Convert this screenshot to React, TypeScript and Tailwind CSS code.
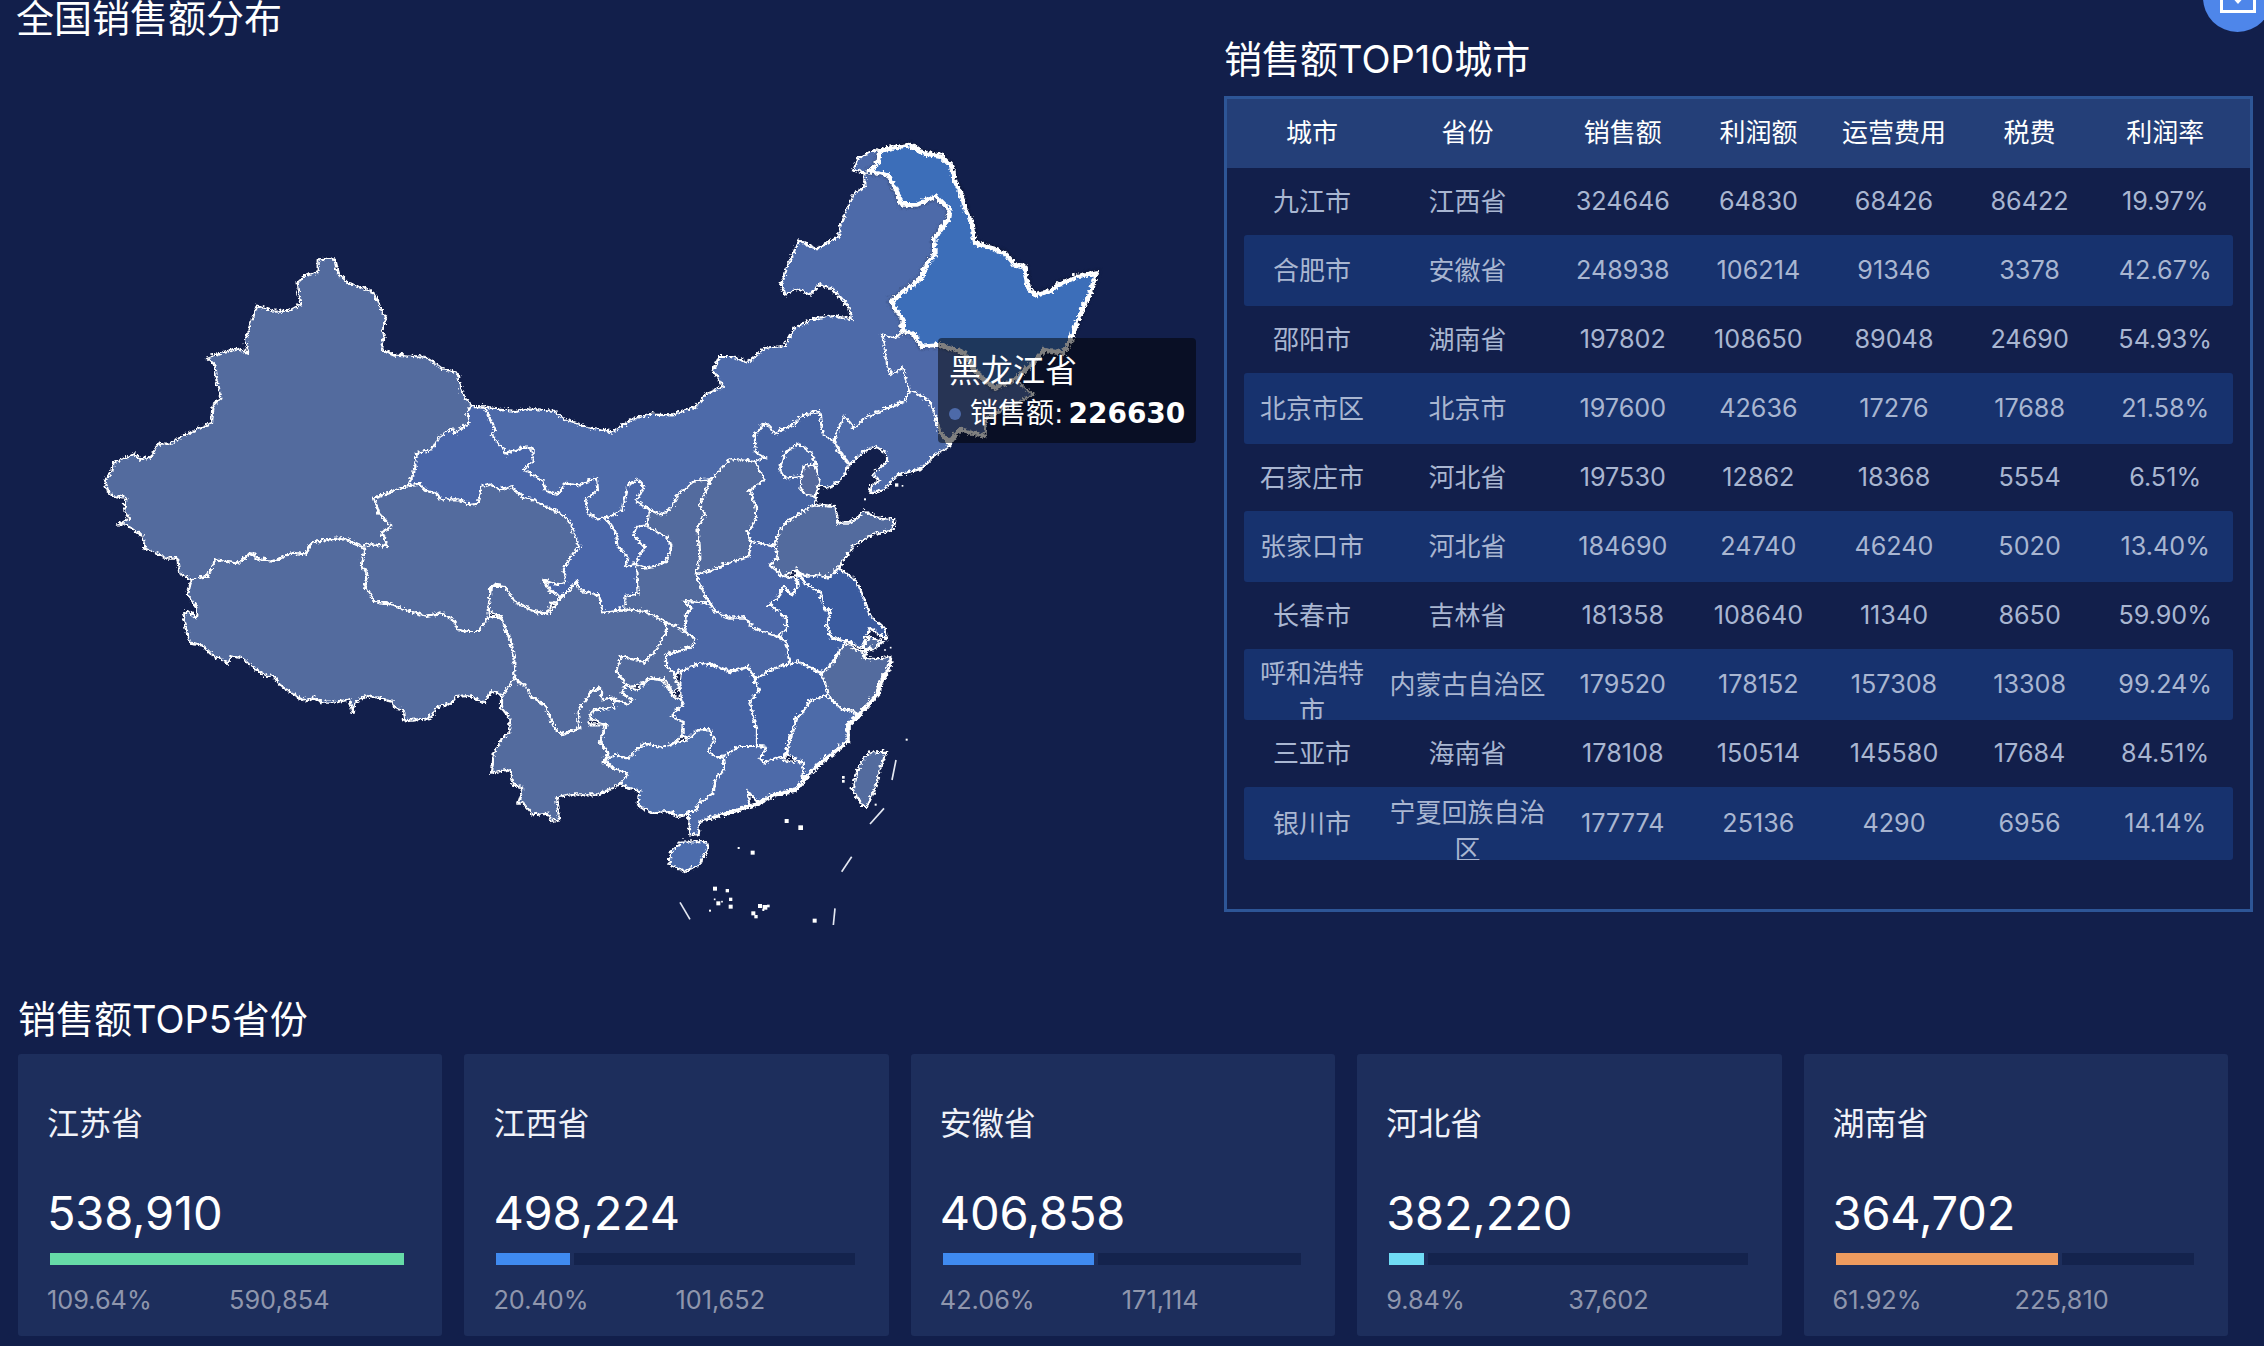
const headers = ["城市", "省份", "销售额", "利润额", "运营费用", "税费", "利润率"];

const rows = [
  ["九江市", "江西省", "324646", "64830", "68426", "86422", "19.97%"],
  ["合肥市", "安徽省", "248938", "106214", "91346", "3378", "42.67%"],
  ["邵阳市", "湖南省", "197802", "108650", "89048", "24690", "54.93%"],
  ["北京市区", "北京市", "197600", "42636", "17276", "17688", "21.58%"],
  ["石家庄市", "河北省", "197530", "12862", "18368", "5554", "6.51%"],
  ["张家口市", "河北省", "184690", "24740", "46240", "5020", "13.40%"],
  ["长春市", "吉林省", "181358", "108640", "11340", "8650", "59.90%"],
  ["呼和浩特市", "内蒙古自治区", "179520", "178152", "157308", "13308", "99.24%"],
  ["三亚市", "海南省", "178108", "150514", "145580", "17684", "84.51%"],
  ["银川市", "宁夏回族自治区", "177774", "25136", "4290", "6956", "14.14%"],
];

const cards = [
  { name: "江苏省", value: "538,910", rate: "109.64%", profit: "590,854", pct: 100, color: "#66dba8" },
  { name: "江西省", value: "498,224", rate: "20.40%", profit: "101,652", pct: 20.4, color: "#3f8af0" },
  { name: "安徽省", value: "406,858", rate: "42.06%", profit: "171,114", pct: 42.06, color: "#3f8af0" },
  { name: "河北省", value: "382,220", rate: "9.84%", profit: "37,602", pct: 9.84, color: "#70dcf5" },
  { name: "湖南省", value: "364,702", rate: "61.92%", profit: "225,810", pct: 61.92, color: "#ee9b5f" },
];

// map outlines are traced from four crops, so every list is offset by its crop origin
const W = [270, 720];
const N = [1800, 390];
const C = [1440, 1200];
const S = [1440, 1860];

const at = (d: number[], s: string) =>
  s
    .trim()
    .split(/\s+/)
    .map((p) => {
      const [x, y] = p.split(",").map(Number);
      return `${x + d[0]},${y + d[1]}`;
    })
    .join(" ");

const provinces = [
  // 内蒙古, lower edge runs under its neighbours
  { fill: "#4d6aa9", pts: at(W, "1140,495 1180,497 1270,510 1310,502 1390,510 1420,535 1490,558 1555,570") + " " + at(N, "30,905 90,865 150,848 215,850 280,828 320,785 365,765 335,720 355,675 390,675 440,693 490,650 550,645 580,590 630,565 695,552 750,565 745,530 690,470 655,460 625,490 590,472 550,490 540,460 555,410 593,328 645,352 715,315 715,285 755,190 790,165 790,125 755,115 770,80 825,55 850,70 900,150 960,190 1040,200 1070,260 1040,370 1000,450 930,530 960,620 960,700 950,830 800,900 650,950 520,950 470,1000 300,1100 235,1130") + " " + at(C, "520,350 450,340 380,370 300,340") + " " + at(W, "1300,700 1180,560") },
  // 甘肃
  { fill: "#4966a9", pts: at(W, "1140,495 1180,497 1212,570 1200,580 1238,625 1240,640 1290,620 1325,620 1325,660 1295,683 1355,720 1360,745 1400,760 1420,725 1465,730 1515,710 1518,745 1482,775 1490,815 1515,832") + " " + at(C, "372,350 450,340 600,350 600,450 560,560 470,600 425,625 365,633 350,580 300,570 285,540 262,570 232,590 190,540 180,500") + " " + at(W, "1300,850 950,800 900,700 1050,500") },
  // 新疆
  { fill: "#536b9e", pts: at(W, "300,1015 265,995 258,950 225,950 160,920 155,885 105,850 82,850 115,830 100,810 103,770 65,765 48,750 40,715 60,695 65,665 105,650 130,635 145,655 180,645 200,608 235,608 265,590 300,572 360,545 365,490 388,470 375,410 370,370 347,350 395,333 437,322 472,335 462,295 485,225 497,192 535,208 590,210 628,190 617,125 640,103 680,90 680,55 730,52 740,95 770,125 800,135 850,155 870,205 885,230 872,265 878,285 870,325 905,340 1005,348 1050,380 1100,397 1110,450 1140,495 1128,510 1133,545 1090,575 1085,560 1040,590 1020,628 978,635 965,700 948,733 900,752 847,770 862,815 900,855 872,872 888,915 835,910 810,915 760,892 710,895 660,905 640,940 600,935 550,960 500,955 480,935 440,965 370,955 350,1005") },
  // 青海
  { fill: "#536b9e", pts: at(W, "948,733 985,728 1000,745 1035,755 1050,775 1105,775 1130,790 1160,785 1170,735 1195,728 1225,745 1262,735 1295,770 1325,775 1375,800 1415,820 1440,850 1450,880 1465,915 1440,945 1415,985 1425,1020 1400,1030 1355,1015 1365,1040 1405,1065 1405,1090 1380,1085 1370,1115 1310,1105 1265,1085 1240,1035 1205,1030 1195,1050 1210,1070 1190,1100 1195,1125 1160,1170 1130,1170 1100,1165 1085,1135 1050,1115 1005,1125 945,1108 900,1090 850,1080 820,1035 828,1000 810,970 820,925 810,915 835,910 888,915 872,872 900,855 862,815 847,770 900,752") },
  // 西藏
  { fill: "#536b9e", pts: at(W, "300,1015 350,1005 370,955 440,965 480,935 500,955 550,960 600,935 640,940 660,905 710,895 760,892 810,915 820,925 810,970 828,1000 820,1035 850,1080 900,1090 945,1108 1005,1125 1050,1115 1085,1135 1100,1165 1130,1170 1160,1170 1195,1125 1230,1130 1250,1185 1265,1225 1272,1310 1265,1345 1250,1365 1200,1350 1180,1385 1130,1362 1095,1365 1080,1385 1035,1400 1015,1432 940,1438 935,1405 910,1400 905,1380 825,1362 790,1385 785,1415 775,1375 725,1385 695,1385 670,1370 640,1378 600,1355 565,1330 545,1303 525,1305 480,1275 450,1248 420,1243 410,1265 355,1235 330,1210 295,1205 280,1145 275,1120 288,1108 315,1130 318,1100 288,1060 295,1030") },
  // 宁夏
  { fill: "#4a66a8", pts: at(C, "372,350 420,330 440,250 470,235 487,255 465,300 505,325 497,370 465,375 455,405 490,435 460,490 430,495 440,465 410,440 405,395") },
  // 陕西
  { fill: "#536b9e", pts: at(C, "690,235 655,310 670,340 650,380 655,470 645,520 665,570 685,605 610,600 630,620 615,640 610,690 555,662 490,630 430,625 430,585 470,578 465,490 490,500 520,495 555,480 570,440 560,410 497,375 505,325 540,340 570,320 590,280 635,240") },
  // 山西
  { fill: "#536b9e", pts: at(C, "820,180 850,235 805,265 825,320 825,350 800,395 810,420 800,465 740,485 700,505 645,520 655,470 650,380 670,340 655,310 690,235 745,175 780,175") },
  // 河北
  { fill: "#4563a3", pts: at(C, "1060,120 1025,100 1015,30 970,40 935,70 880,95 850,65 820,100 825,155 850,170 820,180 850,235 805,265 825,320 825,350 800,395 810,420 880,435 890,400 915,360 1000,310 1005,290 1012,250 1040,260 1075,240 1105,190 1070,150") },
  // 北京
  { fill: "#4a68a6", pts: at(C, "950,125 990,155 1005,190 965,195 960,225 910,230 895,205 910,155") },
  // 天津
  { fill: "#55699c", pts: at(C, "965,195 1000,190 1015,240 1000,285 975,280 955,265") },
  // 辽宁
  { fill: "#4d6aa9", pts: at(N, "925,780 945,785 985,810 1005,860 1015,905 1045,945 1000,970 955,1015 890,1030 850,1075 805,1085 810,1060 835,1050 815,1030 855,990 855,965 825,945 790,960 745,1000 710,950 700,930 715,880 730,855 760,890 790,860 860,830 910,810") },
  // 吉林
  { fill: "#4e69a8", pts: at(N, "905,600 885,620 840,610 850,640 855,700 870,730 905,710 925,780 945,785 985,810 1005,860 1015,905 1045,935 1075,895 1150,915 1155,860 1295,790 1240,745 1180,770 1130,730 1090,665 1015,640 960,645 940,610") },
  // 山东
  { fill: "#536b9e", pts: at(C, "1000,310 1060,315 1070,365 1105,365 1150,330 1190,350 1240,355 1235,385 1175,400 1120,430 1075,495 1040,530 1010,520 975,525 945,505 905,525 865,490 890,470 880,435 890,400 915,360") },
  // 河南
  { fill: "#4b67a8", pts: at(C, "645,520 700,505 740,485 800,465 810,420 880,435 890,470 865,490 905,525 940,530 950,555 930,580 905,555 890,590 865,610 915,650 915,685 890,705 815,680 790,650 740,650 700,630 685,605 665,570") },
  // 江苏
  { fill: "#3a5b9f", pts: at(C, "1075,500 1125,540 1155,610 1165,640 1210,680 1215,715 1165,680 1140,740 1095,720 1050,710 1035,670 1050,625 1030,625 1020,575 975,550 945,510 975,525 1010,520 1040,530") },
  // 上海
  { fill: "#536b9e", pts: at(C, "1165,705 1205,720 1175,745 1145,740") },
  // 安徽
  { fill: "#3f60a4", pts: at(C, "905,555 930,580 950,555 945,510 975,550 1020,575 1030,625 1050,625 1035,670 1050,710 1095,720 1060,770 1025,815 985,795 950,785 925,790 915,720 890,705 915,685 915,650 865,610 890,590") },
  // 湖北
  { fill: "#4b67a6", pts: at(C, "610,600 685,605 700,630 740,650 790,650 815,680 890,705 915,720 925,790 895,795 860,820 820,830 800,795 745,810 680,785 655,795 595,810 580,820 555,795 555,760 635,735 640,710 610,690 615,640 630,620") },
  // 四川
  { fill: "#536b9e", pts: at(C, "20,630 60,645 85,710 100,770 100,830 125,850 150,885 190,910 225,990") + " " + at(S, "240,340 295,320 290,270 330,210 360,200 360,235 395,230 405,240 440,250 455,235 420,215 440,195") + " " + at(C, "405,810 420,765 465,775 490,785 530,740 555,690 555,662 490,630 430,625 365,633 350,580 300,570 285,540 262,570 230,600 205,635 185,640 140,620 100,600 70,555 30,555 25,600") },
  // 重庆
  { fill: "#536b9e", pts: at(C, "555,662 610,690 640,710 635,735 555,760 555,795 580,820 595,860 575,875 550,835 510,830 480,850 440,855 405,810 420,765 465,775 490,785 530,740 555,690") },
  // 云南
  { fill: "#536b9e", pts: at(S, "100,170 120,190 130,190 150,225 190,250 225,330 240,340 295,320 290,270 330,210 360,200 360,235 400,230 400,260 335,265 325,310 375,310 355,360 380,395 365,420 395,440 440,455 415,490 350,520 265,520 225,530 235,595 210,600 200,575 155,580 125,545 110,545 125,500 95,490 85,445 30,455 35,400 60,355 85,330 85,290 60,260 60,225 85,190") },
  // 贵州
  { fill: "#4f6ca5", pts: at(S, "325,290 335,265 400,260 400,235 420,240 440,250 455,235 420,215 435,195 470,205 510,170 540,175 580,230 600,230 605,250 570,285 605,300 605,340 580,365 540,380 490,365 440,410 400,400 370,420 380,395 355,360 375,310") },
  // 湖南
  { fill: "#4563a5", pts: at(S, "600,150 660,125 720,140 745,155 800,135 820,175 835,205 805,240 825,320 825,375 775,375 725,405 700,405 680,390 700,355 685,325 650,325 620,355 605,340 605,300 570,285 605,250 600,230 595,190") },
  // 江西
  { fill: "#3f5fa3", pts: at(S, "820,175 860,150 895,135 925,130 950,120 1020,155 1040,220 985,240 965,275 945,290 915,390 910,410 895,405 850,425 835,410 855,378 825,375 825,320 805,240 835,205") },
  // 浙江
  { fill: "#536b9e", pts: at(S, "1020,155 1060,120 1090,65 1145,95 1170,75 1145,110 1190,115 1225,105 1230,130 1195,190 1190,215 1130,280 1120,270 1080,265 1050,235 1040,220") },
  // 福建
  { fill: "#4d6ba9", pts: at(S, "985,240 1040,220 1050,235 1080,265 1120,270 1130,290 1095,310 1100,360 1050,400 1010,430 965,480 965,425 915,400 945,290 965,275") },
  // 广西
  { fill: "#4f6fac", pts: at(S, "370,415 400,400 440,410 490,365 540,380 580,365 620,355 650,325 685,325 700,355 680,390 700,405 725,410 730,440 700,480 695,515 655,545 640,570 590,585 555,570 510,575 470,550 475,510 415,490 440,455 395,440") },
  // 广东
  { fill: "#4d6aa9", pts: at(S, "725,405 775,375 825,375 855,378 835,410 850,425 895,405 915,420 965,425 965,480 945,505 880,520 830,545 800,510 805,550 690,590 655,600 650,640 625,640 620,570 640,570 655,545 695,515 700,480 730,440") },
  // 海南
  { fill: "#4c6cac", pts: at(S, "570,690 600,662 675,660 680,680 650,735 610,750 565,730") },
  // 台湾
  { fill: "#536b9e", pts: at(S, "1165,395 1215,392 1200,430 1185,490 1155,555 1145,555 1115,505 1125,455 1145,415") },
];

const heilongjiang = at(N, "835,60 870,50 930,42 965,65 1020,75 1050,105 1060,150 1080,190 1090,230 1110,270 1120,335 1175,350 1215,370 1240,400 1270,405 1280,470 1300,490 1350,480 1370,460 1430,435 1485,425 1470,480 1445,530 1425,580 1410,625 1385,665 1330,655 1295,695 1240,745 1180,770 1130,730 1090,665 1015,640 960,645 940,610 905,600 905,570 870,510 960,440 975,400 1000,370 1000,320 1040,265 1045,235 1005,195 945,220 900,220 890,190 860,130 805,120 830,95");

const thickCoast = [
  at(S, "1230,110 1225,135 1195,190 1190,215 1130,285 1100,310 1100,360 1050,400 1010,430 965,480 945,505 880,520 830,545 805,555 690,590"),
  at(N, "1015,905 1045,935 1075,895 1150,915"),
];

const dashes = ["600,847 630,898", "1065,865 1060,915", "1115,710 1085,755", "1212,565 1170,612", "1248,420 1236,480"];

const dots = [
  [920, 603, 12], [962, 623, 14], [818, 698, 12], [776, 684, 6], [705, 806, 12], [742, 812, 10],
  [752, 838, 10], [752, 860, 12], [715, 850, 12], [704, 838, 5], [726, 845, 5], [690, 872, 6],
  [840, 858, 12], [855, 862, 14], [865, 858, 8], [850, 870, 6], [820, 880, 12], [828, 890, 10],
  [1004, 902, 12], [1090, 472, 8], [1090, 484, 8], [1185, 521, 6], [1187, 554, 6], [1280, 359, 6],
  [1232, 83, 5], [1215, 90, 5],
];

function ChinaMap() {
  return (
    <svg viewBox="0 135 3600 2760" className="w-[1200px] h-[920px] block">
      <defs>
        <filter id="rough" x="0" y="0" width="3600" height="2895" filterUnits="userSpaceOnUse" colorInterpolationFilters="sRGB">
          <feTurbulence type="turbulence" baseFrequency="0.075" numOctaves="2" seed="4" result="n" />
          <feDisplacementMap in="SourceGraphic" in2="n" scale="16" xChannelSelector="R" yChannelSelector="G" />
        </filter>
      </defs>
      <g filter="url(#rough)" strokeLinejoin="miter">
        {provinces.map((p, i) => (
          <polygon key={i} points={p.pts} fill={p.fill} stroke="#fff" strokeWidth="6.5" />
        ))}
        {thickCoast.map((c, i) => (
          <polyline key={i} points={c} fill="none" stroke="#fff" strokeWidth="13" />
        ))}
        <polygon points={heilongjiang} fill="#3c6eb9" stroke="#fff" strokeWidth="14" className="drop-shadow-[0_0_5px_rgba(0,0,0,0.45)]" />
      </g>
      {dashes.map((d) => (
        <polyline key={d} points={at(S, d)} fill="none" stroke="#e4e8f2" strokeWidth="5" />
      ))}
      {dots.map(([x, y, r]) => (
        <rect key={`${x}-${y}`} x={x + S[0] - r / 2} y={y + S[1] - r / 2} width={r} height={r} fill="#fff" />
      ))}
      <rect x={1245 + C[0]} y={250 + C[1]} width="10" height="10" fill="#fff" />
      <rect x={1265 + C[0]} y={255 + C[1]} width="5" height="5" fill="#fff" />
      <rect x={1152 + C[0]} y={295 + C[1]} width="6" height="6" fill="#fff" />
    </svg>
  );
}

function CityTable() {
  return (
    <div className="w-[1029px] h-[816px] border-[3px] border-[#2d5596]">
      <div className="h-[69px] bg-[#243f78] px-[17px] pb-[2px] grid grid-cols-[136px_175px_repeat(5,1fr)] items-center text-center text-[26px] text-white">
        {headers.map((h) => (
          <div key={h}>{h}</div>
        ))}
      </div>
      <div className="px-[17px]">
        {rows.map((row, i) => (
          <div
            key={row[0]}
            className={`grid grid-cols-[136px_175px_repeat(5,1fr)] grid-rows-[100%] overflow-hidden rounded-[3px] text-center text-[25.2px] text-[#a9b6d1] ${
              i === 9 ? "h-[73px] bg-[#17326e]" : i % 2 === 1 ? "h-[71px] bg-[#17326e]" : "h-[67px]"
            }`}
          >
            {row.map((cell, j) => {
              const wraps = (j === 0 && cell.length > 4) || (j === 1 && cell.length > 6);
              return (
                <div
                  key={j}
                  className={`flex items-center justify-center px-2 leading-[37.5px] ${j < 2 ? "text-[26px]" : ""} ${wraps ? "mt-[15px]" : ""}`}
                >
                  <span>{cell}</span>
                </div>
              );
            })}
          </div>
        ))}
      </div>
    </div>
  );
}

function ProvinceCard({ card }: { card: (typeof cards)[number] }) {
  return (
    <div className="h-[282px] rounded-[3px] bg-[#1d2e5c] pl-[29px] pr-[34px] pt-[47px]">
      <div className="text-[32px] leading-[45px] text-[#f0f2f8]">{card.name}</div>
      <div className="mt-[33px] text-[47px] leading-[68px] tracking-[-0.2px] text-white">{card.value}</div>
      <div className="mt-[6px] ml-[3px] flex gap-[4px] h-[12px]">
        <div style={{ width: `${card.pct}%`, backgroundColor: card.color }} />
        <div className="flex-1 bg-[#14234d]" />
      </div>
      <div className="mt-[17px] flex text-[25.3px] leading-[36px] text-[#8f96ad]">
        <div className="w-[182px]">{card.rate}</div>
        <div>{card.profit}</div>
      </div>
    </div>
  );
}

export default function App() {
  return (
    <div className="relative w-[2264px] h-[1346px] overflow-hidden bg-[#121f4b] text-white font-['Inter','Noto_Sans_CJK_SC',sans-serif]">
      <div className="absolute left-[2203px] top-[-37px] w-[69px] h-[69px] rounded-full bg-[#4e86ea]">
        <svg viewBox="0 0 36 36" className="absolute left-[17px] top-[14px] w-[36px] h-[36px]" fill="none">
          <path d="M1.5 8V34.5H34.5V8" stroke="#fff" strokeWidth="3" />
          <path d="M10 18H26L18 27Z" fill="#fff" />
        </svg>
      </div>

      <div className="flex h-[992px]">
        <div className="relative w-[1224px] shrink-0 -mt-[9px]">
          <h2 className="h-[54px] pl-[16px] text-[38px] leading-[54px]">全国销售额分布</h2>
          <ChinaMap />
          <div className="absolute left-[938px] top-[347px] w-[258px] h-[105px] rounded-[4px] bg-black/50 pl-[11px] pt-[10px] font-['DejaVu_Sans','Noto_Sans_CJK_SC',sans-serif]">
            <div className="text-[32px] leading-[46px]">黑龙江省</div>
            <div className="flex items-center text-[28px] leading-[40px]">
              <span className="w-[12px] h-[12px] rounded-full bg-[#4d6aa9] mr-[9px]" />
              <span>销售额:</span>
              <span className="ml-[5px] font-bold">226630</span>
            </div>
          </div>
        </div>
        <div className="pt-[32px]">
          <h2 className="mb-[10px] text-[38px] leading-[54px]">销售额TOP10城市</h2>
          <CityTable />
        </div>
      </div>

      <h2 className="ml-[18px] mb-[8px] text-[38px] leading-[54px]">销售额TOP5省份</h2>
      <div className="grid grid-cols-5 gap-[22px] pl-[18px] pr-[36px]">
        {cards.map((c) => (
          <ProvinceCard key={c.name} card={c} />
        ))}
      </div>
    </div>
  );
}
